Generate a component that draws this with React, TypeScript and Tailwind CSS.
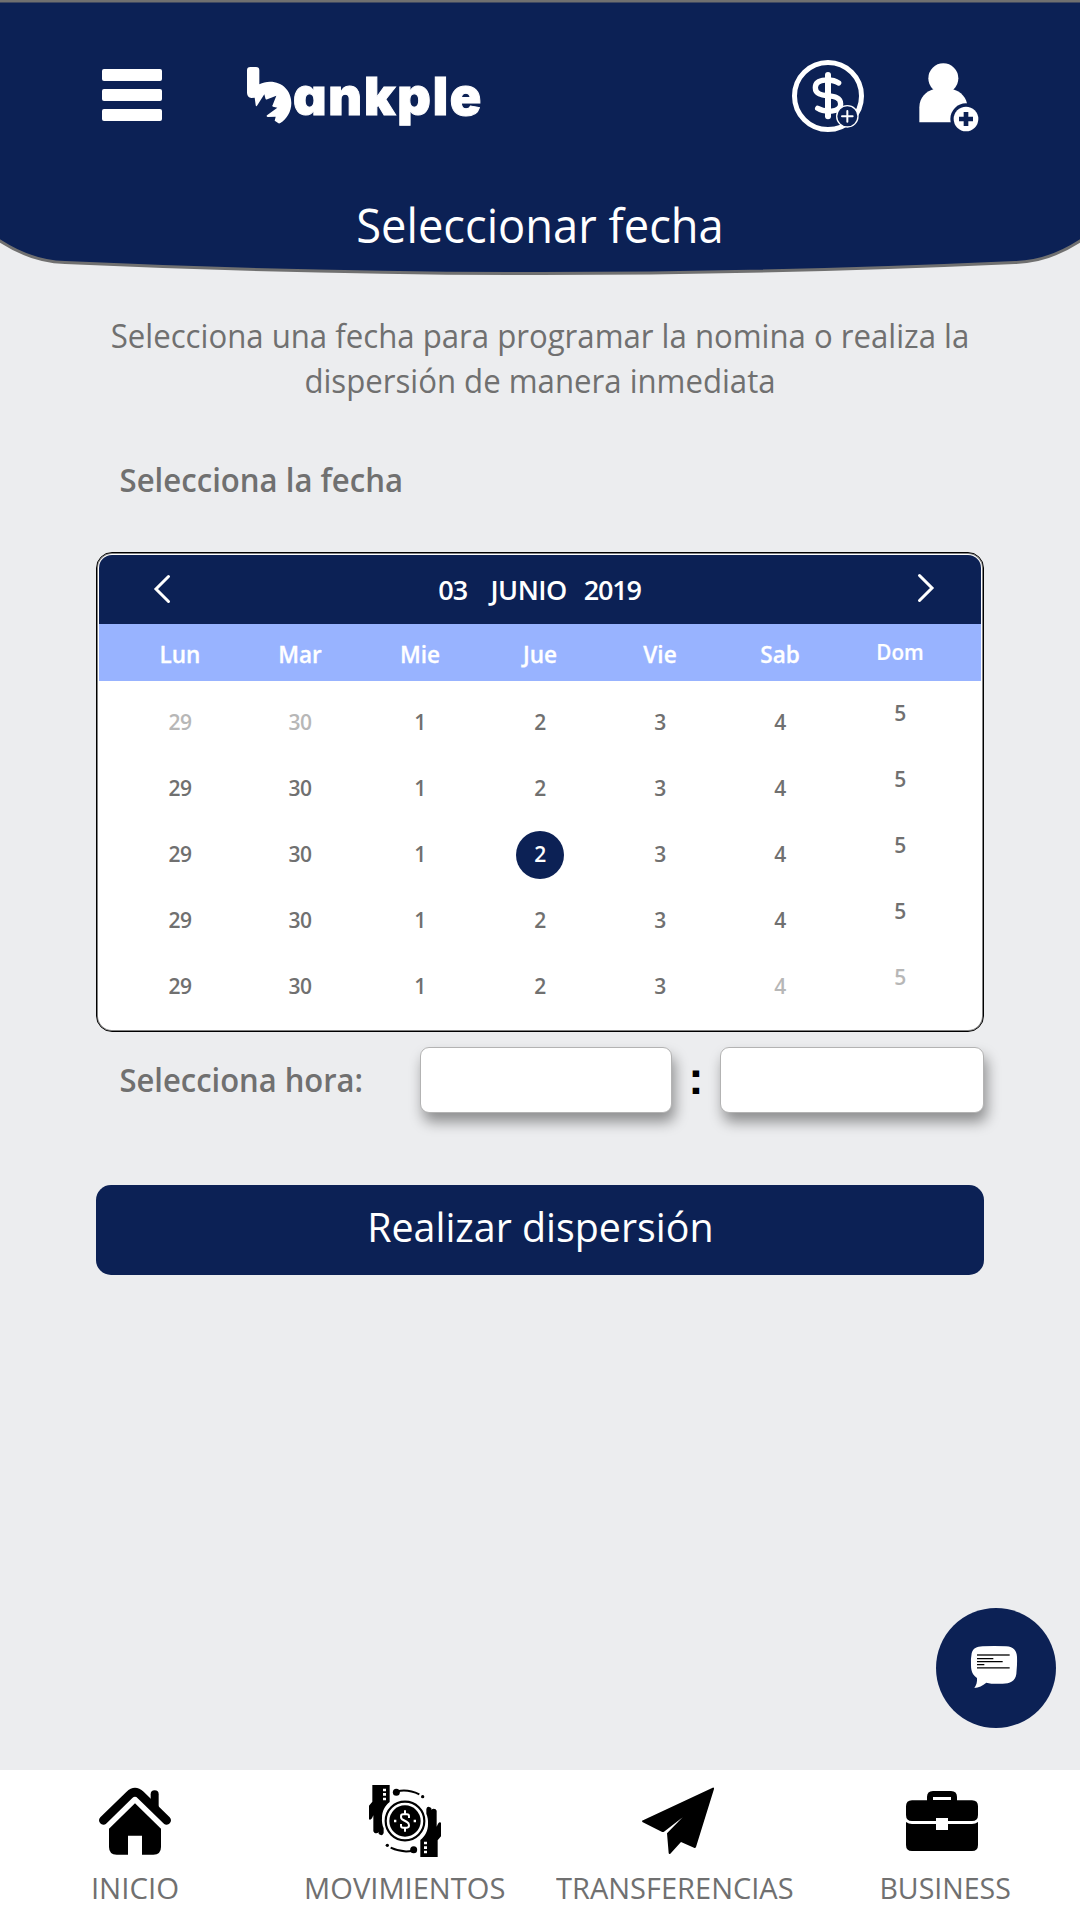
import type { ReactNode } from "react";

const weekdays = ["Lun", "Mar", "Mie", "Jue", "Vie", "Sab"];
const weeks = [0, 1, 2, 3, 4];
const days = ["29", "30", "1", "2", "3", "4", "5"];

function isMuted(week: number, day: number) {
  return (week === 0 && day < 2) || (week === 4 && day > 4);
}

function HeaderShape() {
  return (
    <svg className="absolute inset-0 h-[280px] w-[1080px]" viewBox="0 0 1080 280" fill="none">
      <path
        d="M-20 1 H1100 V228 L1080 241 C1060 254 1038 262 1015 262.500 C860 269.500 700 273.500 540 273.500 C380 273.500 220 269.500 65 262.500 C42 262 20 254 0 241 L-20 228 Z"
        fill="#0c2155"
        stroke="#707070"
        strokeWidth="3"
      />
    </svg>
  );
}

function LogoMark() {
  return (
    <svg className="h-[57px] w-[45px]" viewBox="499 79 135 171" fill="#fff">
      <path d="M509 79 H526 Q536 79 536 89 V131 C546 126 556 123 568 123 C606 123 632 151 632 187 C632 213 618 236 599 247 Q594 250 589 245 L582 240 L585 228 L561 229 Q555 227 560 223 L590 201 L577 198 Q573 196 576 193 L587 165 L560 176 Q555 178 554 173 L551 161 L530 194 Q526 200 525 193 L522 171 L512 172 Q500 170 499 157 V89 Q499 79 509 79 Z" />
    </svg>
  );
}

function DollarIcon() {
  return (
    <svg className="h-[76px] w-[76px]" viewBox="60 54 228 228" fill="none">
      <circle cx="174" cy="168" r="100.500" stroke="#fff" strokeWidth="15" />
      <path d="M174 105 V229" stroke="#fff" strokeWidth="18" strokeLinecap="round" />
      <path
        d="M206 129 C190 118 136 112 136 143 C136 182 212 152 212 192 C212 219 162 217 143 205"
        stroke="#fff"
        strokeWidth="16"
        strokeLinecap="round"
      />
      <circle cx="232" cy="229" r="32" fill="#0c2155" stroke="#fff" strokeWidth="4" />
      <path d="M232 213 V245 M216 229 H248" stroke="#fff" strokeWidth="6" strokeLinecap="round" />
    </svg>
  );
}

function UserPlusIcon() {
  return (
    <svg className="h-[70px] w-[62px]" viewBox="446 68 186 210">
      <circle cx="522" cy="117" r="45" fill="#fff" />
      <path d="M450 249 V204 C450 174 471 155 495 149 H549 C576 157 592 174 595 204 V249 Z" fill="#fff" />
      <circle cx="590" cy="239" r="47" fill="#0c2155" />
      <circle cx="590" cy="239" r="37" fill="#fff" />
      <path d="M590 218 V260 M569 239 H611" stroke="#0c2155" strokeWidth="14" />
    </svg>
  );
}

function ChatIcon() {
  return (
    <svg className="h-[44px] w-[48px]" viewBox="152 165 144 132">
      <path
        d="M190 169 Q224 167 260 169 C284 170 292 184 293 200 Q294 226 291 252 C288 274 272 281 250 281 Q220 283 201 278 C190 287 178 293 165 294 C171 286 174 276 173 264 C160 255 155 244 155 226 Q154 204 157 190 C161 174 172 170 190 169 Z"
        fill="#fff"
      />
      <path d="M173 195 H271" stroke="#222" strokeWidth="5" />
      <path d="M173 206 H222 M173 215 H250 M173 224 H195 M173 233.500 H271" stroke="#000" strokeWidth="3.500" />
    </svg>
  );
}

function HomeIcon() {
  return (
    <svg className="h-[72px] w-[72px]" viewBox="57 60 216 216">
      <path
        d="M70 166 L148 90 Q165 74 182 90 L260 166"
        fill="none"
        stroke="#000"
        strokeWidth="26"
        strokeLinecap="round"
        strokeLinejoin="round"
      />
      <path d="M212 120 V88 Q212 76 224 76 Q236 76 236 88 V144 Z" />
      <path d="M165 115 L243 191 V246 Q243 269 220 269 H186 V212 H144 V269 H110 Q87 269 87 246 V191 Z" />
    </svg>
  );
}

function Hand() {
  return (
    <>
      <path d="M877 60 H929 V111 C914 122 906 140 906 158 C905 170 907 180 911 190 V204 Q909 212 902 210 L896 207 V202 Q890 207 883 203 L880 199 V151 L876 160 Q871 167 867 163 V122 L877 110 Z" />
      <path d="M909 71 h9 v8 h-9 z M909 84 h9 v8 h-9 z M909 98 h9 v8 h-9 z" fill="#fff" />
      <circle cx="949" cy="82" r="10.500" />
      <path d="M952 79 C975 74 999 79 1018 88" fill="none" stroke="#000" strokeWidth="6" />
      <circle cx="1028" cy="95" r="5" />
    </>
  );
}

function MovementsIcon() {
  return (
    <svg className="h-[72px] w-[72px]" viewBox="867 60 216 216">
      <Hand />
      <g transform="rotate(180 975 168)">
        <Hand />
      </g>
      <circle cx="975" cy="168" r="66" fill="#fff" />
      <circle cx="975" cy="168" r="58" fill="none" stroke="#000" strokeWidth="6.500" />
      <circle cx="975" cy="168" r="47" />
      <path
        d="M975 136 V146 M975 188 V200 M987 159 V154 Q987 148 981 148 H969 Q963 148 963 155 Q963 162 970 165 L981 171 Q987 174 987 181 Q987 188 981 188 H969 Q963 188 963 182 V177"
        fill="none"
        stroke="#fff"
        strokeWidth="6"
      />
      <path d="M942 164 h7 v8 h-7 z M1001 164 h7 v8 h-7 z" fill="#fff" />
    </svg>
  );
}

function PlaneIcon() {
  return (
    <svg className="ml-[6px] h-[72px] w-[72px]" viewBox="306 60 216 216">
      <path d="M306 167 L518 68 Q523 67 522 72 L468 246 Q466 250 462 248 L423 231 L391 266 Q387 269 386 264 L381 205 L428 157 L372 200 Q369 202 365 200 L307 171 Z" />
    </svg>
  );
}

function BriefcaseIcon() {
  return (
    <svg className="mr-[6px] h-[72px] w-[72px]" viewBox="1098 60 216 216">
      <path
        d="M1161 106 V96 Q1161 78 1179 78 H1233 Q1251 78 1251 96 V106 H1296 Q1314 106 1314 124 V150 Q1314 168 1296 168 H1224 V159 H1188 V168 H1116 Q1098 168 1098 150 V124 Q1098 106 1116 106 Z M1179 96 V105 H1233 V96 Z"
        fillRule="evenodd"
      />
      <path d="M1098 171 Q1106 177 1116 177 H1188 V195 H1224 V177 H1296 Q1306 177 1314 171 V240 Q1314 258 1296 258 H1116 Q1098 258 1098 240 Z" />
    </svg>
  );
}

function Chevron({ className }: { className: string }) {
  return (
    <svg className={className} viewBox="0 0 18 30" fill="none" stroke="#fff" strokeWidth="3">
      <path d="M15.500 2.500 L3 15 L15.500 27.500" strokeLinecap="round" />
    </svg>
  );
}

function NavItem({ label, className, children }: { label: string; className: string; children: ReactNode }) {
  return (
    <a className="flex flex-1 flex-col items-center gap-[11px] pt-[15px]">
      {children}
      <span className={className}>{label}</span>
    </a>
  );
}

function Header() {
  return (
    <header className="relative h-[276px]">
      <HeaderShape />
      <div className="relative flex h-[193px] items-start pl-[102px]">
        <div className="mt-[69px] flex w-[60px] flex-col gap-2">
          <span className="h-3 rounded-[2px] bg-white" />
          <span className="h-3 rounded-[2px] bg-white" />
          <span className="h-3 rounded-[2px] bg-white" />
        </div>
        <div className="mt-[66.500px] ml-[84.500px] flex items-start">
          <LogoMark />
          <span className="mt-[0.500px] ml-[1.500px] w-[190px] whitespace-nowrap font-['Inter'] text-[52px] leading-[60px] font-black tracking-[1.8px] text-white [-webkit-text-stroke:1px_white] [font-feature-settings:'cv11']">
            ankple
          </span>
        </div>
        <div className="mt-[58px] ml-[307px]">
          <DollarIcon />
        </div>
        <div className="mt-[62px] ml-[52px]">
          <UserPlusIcon />
        </div>
      </div>
      <h1 className="relative scale-x-[0.963] text-center text-[47px] leading-[64px] text-white">Seleccionar fecha</h1>
    </header>
  );
}

function Calendar() {
  return (
    <section className="mt-[50px] h-[480px] rounded-[16px] border border-black bg-white p-[2px] shadow-[inset_0_0_0_1px_#808080]">
      <div className="flex h-[69px] items-center justify-between rounded-t-[13px] bg-[#0c2155] pr-[46px] pl-[54px] text-[27px] font-semibold text-white">
        <Chevron className="mb-[1px] h-[30px] w-[18px]" />
        <div className="mr-[9px] flex leading-[40px]">
          <span className="tracking-[-0.8px]">03</span>
          <span className="ml-[23px] tracking-[-0.5px]">JUNIO</span>
          <span className="ml-[17px] tracking-[-1.2px]">2019</span>
        </div>
        <Chevron className="mb-[3px] h-[30px] w-[18px] rotate-180" />
      </div>
      <div className="grid h-[57px] grid-cols-[repeat(7,120px)] items-center justify-center bg-[#98b3ff] text-center text-[24px] font-semibold text-white">
        {weekdays.map((name) => (
          <span key={name} className="scale-x-[0.94] pt-[3px] [-webkit-text-stroke:0.3px_white]">
            {name}
          </span>
        ))}
        <span className="scale-x-[0.96] text-[21.500px] [-webkit-text-stroke:0.2px_white]">Dom</span>
      </div>
      <div className="grid auto-rows-[66px] grid-cols-[repeat(7,120px)] justify-center pt-[8px] text-center text-[21px] leading-[66px] font-semibold tracking-[-0.4px]">
        {weeks.flatMap((week) =>
          days.map((day, i) => {
            const selected = week === 2 && i === 3;
            if (selected) {
              return (
                <div key={`${week}-${i}`} className="flex items-center justify-center pt-[2px]">
                  <span className="h-12 w-12 rounded-full bg-[#0c2155] leading-[46px] text-white">{day}</span>
                </div>
              );
            }
            return (
              <div
                key={`${week}-${i}`}
                className={(i === 6 ? "-mt-[9px] " : "") + (isMuted(week, i) ? "text-[#b7b7b7]" : "text-[#707070]")}
              >
                {day}
              </div>
            );
          }),
        )}
      </div>
    </section>
  );
}

export default function App() {
  return (
    <div className="flex h-[1920px] w-[1080px] flex-col overflow-hidden bg-[#ecedef] font-['Open_Sans','Noto_Sans',sans-serif] text-[#707070]">
      <Header />
      <main className="relative flex-1 px-[96px]">
        <p className="mx-[-40px] mt-[37px] scale-x-[0.944] text-center text-[33px] leading-[45px]">
          Selecciona una fecha para programar la nomina o realiza la
          <br />
          dispersión de manera inmediata
        </p>
        <h2 className="mt-[55px] origin-left scale-x-[0.943] pl-[25px] text-[33px] leading-[44px] font-semibold">
          Selecciona la fecha
        </h2>
        <Calendar />
        <div className="mt-[15px] flex h-[66px] items-center">
          <span className="w-[324px] origin-left scale-x-[0.938] pl-[25px] text-[33px] leading-[44px] font-semibold">
            Selecciona hora:
          </span>
          <div className="h-[66px] w-[252px] rounded-[9px] border border-[#b3b3b3] bg-white shadow-[3px_9px_14px_rgba(0,0,0,0.4)]" />
          <span className="mb-[5px] w-12 text-center font-['Liberation_Sans'] text-[46px] leading-[60px] font-bold text-black">
            :
          </span>
          <div className="h-[66px] w-[264px] rounded-[9px] border border-[#b3b3b3] bg-white shadow-[3px_9px_14px_rgba(0,0,0,0.4)]" />
        </div>
        <button className="mt-[72px] block h-[90px] w-full rounded-[15px] bg-[#0c2155] pb-[8px] text-[41px] leading-[56px] text-white">
          <span className="inline-block scale-x-[0.96]">Realizar dispersión</span>
        </button>
        <button className="absolute right-6 bottom-[42px] flex h-[120px] w-[120px] items-center justify-center rounded-full bg-[#0c2155] pr-[4px] pb-[3px]">
          <ChatIcon />
        </button>
      </main>
      <nav className="flex h-[150px] bg-white text-[30px] leading-[40px]">
        <NavItem label="INICIO" className="scale-x-[0.98]">
          <HomeIcon />
        </NavItem>
        <NavItem label="MOVIMIENTOS" className="scale-x-[0.97]">
          <MovementsIcon />
        </NavItem>
        <NavItem label="TRANSFERENCIAS" className="scale-x-[0.967]">
          <PlaneIcon />
        </NavItem>
        <NavItem label="BUSINESS" className="scale-x-[0.95]">
          <BriefcaseIcon />
        </NavItem>
      </nav>
    </div>
  );
}
